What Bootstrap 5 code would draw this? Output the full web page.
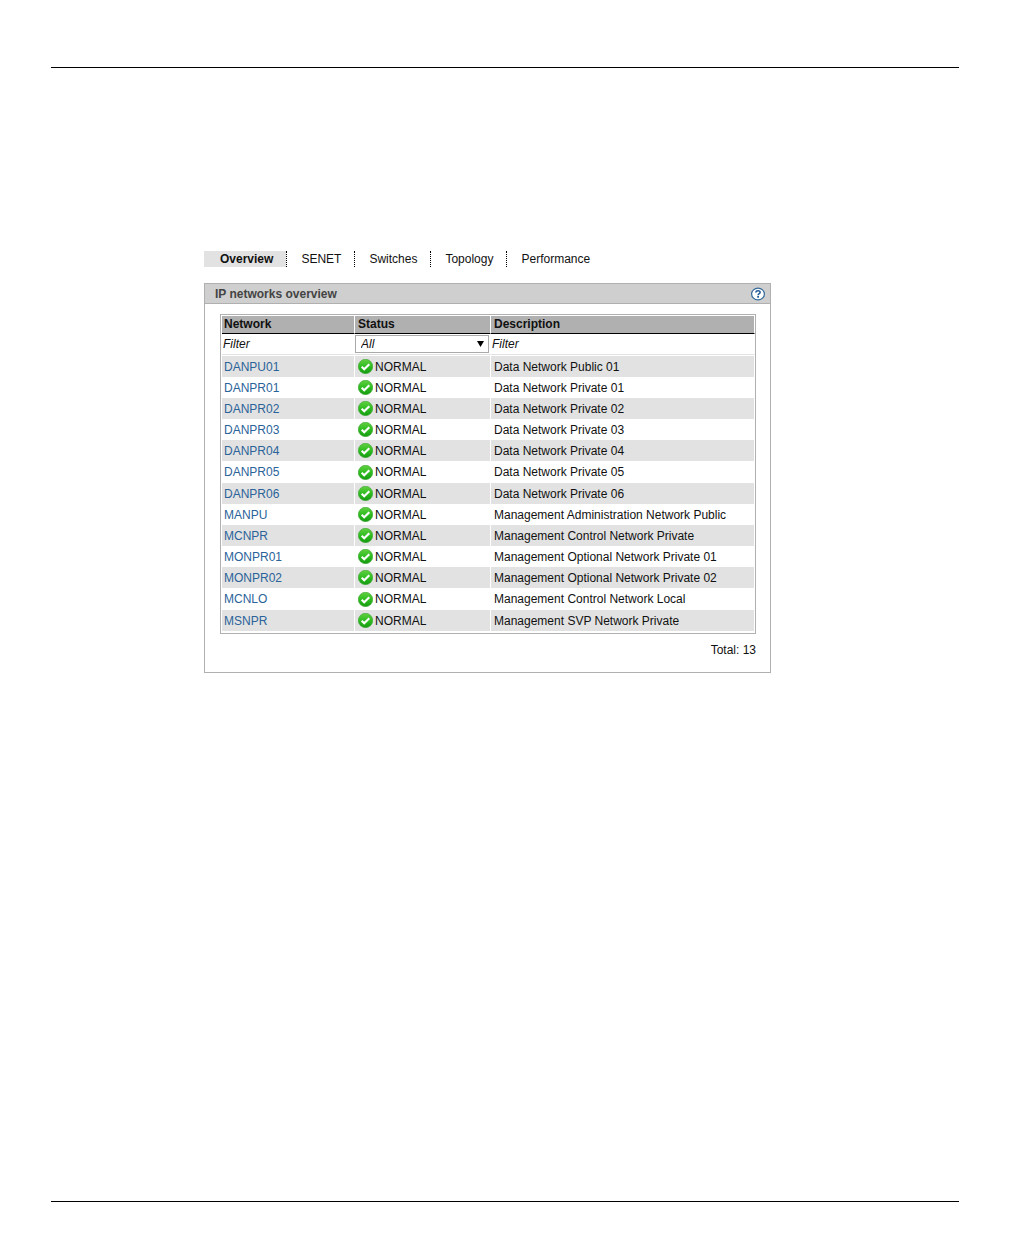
<!DOCTYPE html>
<html lang="en">
<head>
<meta charset="utf-8">
<meta name="viewport" content="width=device-width, initial-scale=1">
<title>IP networks overview</title>
<link href="https://cdn.jsdelivr.net/npm/bootstrap@5.3.0/dist/css/bootstrap.min.css" rel="stylesheet">
<style>
body{font:12px/16px "Liberation Sans",Arial,sans-serif;color:#111;background:#fff}
.sheet{padding:67px 51px 56px}
.rule{border-top:1px solid #000}
.content{width:100%;max-width:720px;padding:183px 0 0 153px}
.tabs{margin-bottom:16px}
.tabs .nav-item+.nav-item{border-left:1px dotted #000}
.tabs .nav-link{color:#111;padding:0 13px 0 14px;line-height:16px}
.tabs .nav-link.active{background:#e2e2e2;font-weight:700;padding-left:16px}
.panel{border:1px solid #b0b0b0}
.panel-head{height:20px;background:#cfcfcf;border-bottom:1px solid #b0b0b0;padding:0 5px 0 10px}
.panel-head h1{font-size:12px;line-height:20px;font-weight:700;color:#444}
.help{line-height:0}
.panel-main{padding:10px 14px 14px 15px}
.frame{border:1px solid #b0b0b0;padding:1px 0 2px 1px}
.grid{width:100%;table-layout:fixed;border-collapse:separate;border-spacing:0}
.col-network{width:133px}
.col-status{width:136px}
.grid th,.grid td{padding:0 3px;border-right:1px solid #fff;white-space:nowrap}
.grid th:first-child,.grid td:first-child{padding-left:2px}
.grid thead th{height:18px;line-height:17px;background:#b0b0b0;border-bottom:1px solid #000;color:#111}
.grid .filters td{height:21px;padding:0;border-bottom:1px solid #e2e2e2}
.grid tbody tr{height:21px}
.grid tbody tr:nth-child(6n){height:22px}
.grid tbody tr:nth-child(odd){background:#e2e2e2}
.grid tbody::before{content:"";display:block;height:1px}
.grid td a{color:#2a6399;text-decoration:none}
.filter{display:block;width:100%;height:18px;border:0;padding:0 1px;font-style:italic;background:#fff;color:#111}
.filter::placeholder{color:#111;opacity:1}
.pick{position:relative;margin-right:1px}
.pick select{display:block;width:100%;height:18px;appearance:none;border:1px solid #aaa;border-radius:0;padding:0 5px;font-style:italic;background:#fff;color:#111}
.pick svg{position:absolute;right:5px;top:6px;pointer-events:none}
.state{gap:2px}
.total{margin-top:8px}
</style>
<script src="https://cdn.jsdelivr.net/npm/bootstrap@5.3.0/dist/js/bootstrap.bundle.min.js"></script>
</head>
<body>
<svg class="position-absolute" width="0" height="0" aria-hidden="true">
<defs><linearGradient id="green" x1="0" y1="0" x2="0" y2="1"><stop offset="0" stop-color="#63cf43"/><stop offset=".5" stop-color="#2fbd20"/><stop offset="1" stop-color="#159a10"/></linearGradient></defs>
</svg>
<div class="sheet d-flex flex-column min-vh-100">
<header class="rule"></header>
<main class="content">
<nav aria-label="Network views">
<ul class="tabs nav">
<li class="nav-item"><a class="nav-link active" aria-current="page" href="#">Overview</a></li>
<li class="nav-item"><a class="nav-link" href="#">SENET</a></li>
<li class="nav-item"><a class="nav-link" href="#">Switches</a></li>
<li class="nav-item"><a class="nav-link" href="#">Topology</a></li>
<li class="nav-item"><a class="nav-link" href="#">Performance</a></li>
</ul>
</nav>
<section class="panel">
<div class="panel-head d-flex align-items-center justify-content-between">
<h1 class="m-0">IP networks overview</h1>
<button type="button" class="help btn p-0 border-0" aria-label="Help">
<svg width="14" height="14" viewBox="0 0 14 14"><ellipse cx="7" cy="7" rx="6.4" ry="5.9" fill="#fff" stroke="#34699a" stroke-width="1.2"/><path d="M4.9 5.5C5 3.2 9.2 3.2 9.1 5.5C9 6.7 7.2 6.7 7.1 8.2" fill="none" stroke="#275f98" stroke-width="1.6"/><path d="M6.2 9.1h1.8v1.6H6.2z" fill="#275f98"/></svg>
</button>
</div>
<div class="panel-main">
<div class="frame">
<table class="grid">
<colgroup><col class="col-network"><col class="col-status"><col></colgroup>
<thead>
<tr><th scope="col">Network</th><th scope="col">Status</th><th scope="col">Description</th></tr>
<tr class="filters">
<td><input class="filter" type="text" placeholder="Filter" aria-label="Filter networks"></td>
<td><div class="pick"><select aria-label="Filter by status"><option>All</option><option>NORMAL</option></select><svg width="7" height="6" viewBox="0 0 7 6"><path d="M0 0h7L3.5 6z" fill="#000"/></svg></div></td>
<td><input class="filter" type="text" placeholder="Filter" aria-label="Filter descriptions"></td>
</tr>
</thead>
<tbody id="networks"></tbody>
</table>
</div>
<div class="total text-end">Total: <span id="total"></span></div>
</div>
</section>
</main>
<footer class="rule mt-auto"></footer>
</div>
<script>
const networks = [
["DANPU01","Data Network Public 01"],
["DANPR01","Data Network Private 01"],
["DANPR02","Data Network Private 02"],
["DANPR03","Data Network Private 03"],
["DANPR04","Data Network Private 04"],
["DANPR05","Data Network Private 05"],
["DANPR06","Data Network Private 06"],
["MANPU","Management Administration Network Public"],
["MCNPR","Management Control Network Private"],
["MONPR01","Management Optional Network Private 01"],
["MONPR02","Management Optional Network Private 02"],
["MCNLO","Management Control Network Local"],
["MSNPR","Management SVP Network Private"]
];
const ok = '<svg width="15" height="15" viewBox="0 0 15 15" aria-hidden="true"><circle cx="7.5" cy="7.5" r="7.2" fill="url(#green)" stroke="#35a52b" stroke-width=".6"/><path d="M3.7 7.8l2.5 2.5 5.1-5.1" fill="none" stroke="#fff" stroke-width="2.1"/></svg>';
document.getElementById("networks").innerHTML = networks.map(([name, text]) =>
`<tr><td><a href="#">${name}</a></td><td><div class="state d-flex align-items-center">${ok}<span>NORMAL</span></div></td><td>${text}</td></tr>`).join("");
document.getElementById("total").textContent = networks.length;
</script>
</body>
</html>
